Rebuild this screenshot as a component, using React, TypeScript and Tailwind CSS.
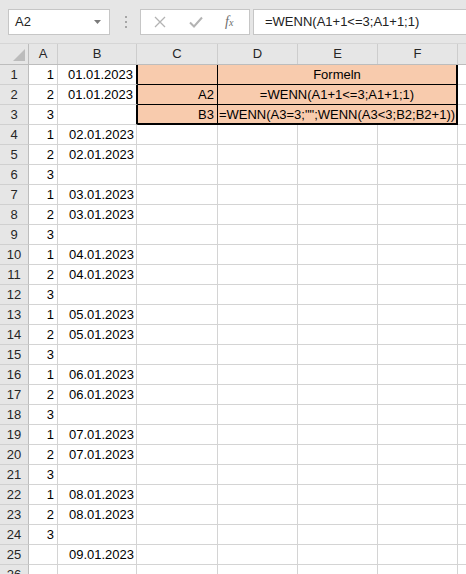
import React from "react";

const ORANGE = "bg-[#f8cbad]";

function HeaderRow() {
  const cols: [string, string][] = [
    ["A", "w-[29px]"],
    ["B", "w-[79px]"],
    ["C", "w-[81px]"],
    ["D", "w-[80px]"],
    ["E", "w-[80px]"],
    ["F", "w-[80px]"],
    ["", "w-[60px]"],
  ];
  return (
    <div className="flex h-[21px] bg-[#e6e6e6] border-b border-[#bdbdbd]">
      <div className="w-[29px] h-[20px] shrink-0 border-r border-[#bdbdbd] relative">
        <svg className="absolute left-0 top-0" width="29" height="20" viewBox="0 0 29 20">
          <polygon points="13,17 25,5 25,17" fill="#bcbcbc" />
        </svg>
      </div>
      {cols.map(([l, w], i) => (
        <div
          key={i}
          className={`${w} h-[20px] shrink-0 border-r border-[#cdcdcd] flex items-center justify-center text-[13px] text-[#262626]`}
        >
          {l}
        </div>
      ))}
    </div>
  );
}

function RowHead({ n }: { n: number }) {
  return (
    <div className="w-[29px] h-[20px] shrink-0 bg-[#e6e6e6] border-r border-b border-r-[#bdbdbd] border-b-[#d0d0d0] flex items-end justify-center leading-[19px] text-[13px] text-[#262626]">
      {n}
    </div>
  );
}

const cellBase = "h-[20px] shrink-0 border-r border-b border-[#d4d4d4] leading-[19px] text-[13px] whitespace-nowrap";

function NormalRow({ n, a, b }: { n: number; a: string; b: string }) {
  return (
    <div className="flex">
      <RowHead n={n} />
      <div className={`${cellBase} w-[29px] text-right pr-[3px]`}>{a}</div>
      <div className={`${cellBase} w-[79px] text-right pr-[2px]`}>{b}</div>
      <div className={`${cellBase} w-[81px]`}></div>
      <div className={`${cellBase} w-[80px]`}></div>
      <div className={`${cellBase} w-[80px]`}></div>
      <div className={`${cellBase} w-[80px]`}></div>
      <div className={`${cellBase} w-[60px]`}></div>
    </div>
  );
}

function TableRow({
  n,
  a,
  b,
  c,
  d,
  last,
}: {
  n: number;
  a: string;
  b: string;
  c: string;
  d: string;
  last?: boolean;
}) {
  const bottom = last ? "border-b-2 border-b-black" : "border-b border-b-black";
  return (
    <div className="flex">
      <RowHead n={n} />
      <div className={`${cellBase} w-[29px] text-right pr-[3px]`}>{a}</div>
      <div className="h-[20px] shrink-0 w-[80px] border-b border-b-[#d4d4d4] border-r-2 border-r-black text-right pr-[3px] leading-[19px] text-[13px] whitespace-nowrap">
        {b}
      </div>
      <div className={`h-[20px] shrink-0 w-[80px] ${ORANGE} border-r border-r-black ${bottom} text-right pr-[3px] leading-[19px] text-[13px] whitespace-nowrap`}>
        {c}
      </div>
      <div className={`h-[20px] shrink-0 w-[240px] ${ORANGE} border-r-2 border-r-black ${bottom} text-center leading-[19px] text-[13px] whitespace-nowrap overflow-visible flex justify-center`}>
        <span>{d}</span>
      </div>
      <div className={`${cellBase} w-[60px]`}></div>
    </div>
  );
}

function Toolbar() {
  return (
    <div className="h-[44px] bg-[#e6e6e6] flex items-start pt-[9px] border-b border-[#d6d6d6]">
      <div className="ml-[8px] w-[102px] h-[26px] shrink-0 bg-white border border-[#c6c6c6] flex items-center justify-between pl-[6px] pr-[8px]">
        <span className="text-[13px] text-[#222]">A2</span>
        <svg width="7" height="4" viewBox="0 0 7 4">
          <polygon points="0,0 7,0 3.5,4" fill="#7a7a7a" />
        </svg>
      </div>
      <div className="ml-[14px] w-[3px] h-[26px] shrink-0 flex flex-col items-center justify-center gap-[3px]">
        <div className="w-[2px] h-[2px] bg-[#a6a6a6]" />
        <div className="w-[2px] h-[2px] bg-[#a6a6a6]" />
        <div className="w-[2px] h-[2px] bg-[#a6a6a6]" />
      </div>
      <div className="ml-[13px] w-[110px] h-[26px] shrink-0 bg-white border border-[#c6c6c6] flex items-center pl-[13px]">
        <svg width="12" height="12" viewBox="0 0 12 12">
          <path d="M1 1 L11 11 M11 1 L1 11" stroke="#b3b3b3" strokeWidth="1.3" fill="none" />
        </svg>
        <svg className="ml-[23px]" width="14" height="12" viewBox="0 0 14 12">
          <path d="M1 6.5 L5 10.5 L13 1.5" stroke="#b3b3b3" strokeWidth="2" fill="none" />
        </svg>
        <span className="ml-[22px] text-[#6e6e6e] italic text-[14px] leading-none" style={{ fontFamily: '"Liberation Serif", serif' }}>
          f<span className="text-[10px]">x</span>
        </span>
      </div>
      <div className="ml-[3px] flex-1 h-[26px] bg-white border border-r-0 border-[#c6c6c6] flex items-center pl-[11px] text-[13px] text-[#222] whitespace-nowrap">
        =WENN(A1+1&lt;=3;A1+1;1)
      </div>
    </div>
  );
}

export default function App() {
  const rows: { n: number; a: string; b: string }[] = [];
  for (let r = 4; r <= 26; r++) {
    const idx = r - 1;
    if (r === 25) {
      rows.push({ n: r, a: "", b: "09.01.2023" });
    } else if (r === 26) {
      rows.push({ n: r, a: "", b: "" });
    } else {
      const a = (idx % 3) + 1;
      const day = Math.floor(idx / 3) + 1;
      rows.push({ n: r, a: String(a), b: a === 3 ? "" : `0${day}.01.2023` });
    }
  }
  return (
    <div
      className="w-[466px] h-[574px] overflow-hidden bg-white text-black"
      style={{ fontFamily: '"Liberation Sans", Arial, sans-serif' }}
    >
      <Toolbar />
      <HeaderRow />
      <TableRow n={1} a="1" b="01.01.2023" c="" d="Formeln" />
      <TableRow n={2} a="2" b="01.01.2023" c="A2" d="=WENN(A1+1<=3;A1+1;1)" />
      <TableRow n={3} a="3" b="" c="B3" d={'=WENN(A3=3;"";WENN(A3<3;B2;B2+1))'} last />
      {rows.map((r) => (
        <NormalRow key={r.n} n={r.n} a={r.a} b={r.b} />
      ))}
    </div>
  );
}
